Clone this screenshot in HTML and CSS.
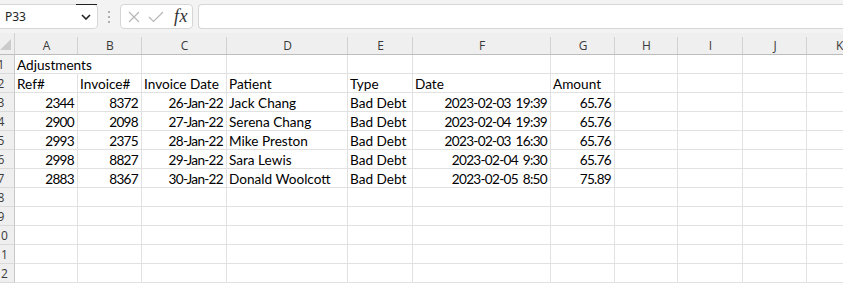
FILE: index.html
```html
<!DOCTYPE html>
<html>
<head>
<meta charset="utf-8">
<link rel="stylesheet" href="styles.css">
</head>
<body>
<div class="toolbar">
  <div class="namebox">
    <span class="name">P33</span>
    <svg class="chev" width="10" height="6" viewBox="0 0 10 6"><path d="M1 1 L5 5 L9 1" fill="none" stroke="#222" stroke-width="1.6"/></svg>
  </div>
  <div class="dots"><i></i><i></i><i></i></div>
  <div class="fbox">
    <svg width="12" height="12" viewBox="0 0 12 12"><path d="M1 1 L11 11 M11 1 L1 11" stroke="#b5b5b5" stroke-width="1.1" fill="none"/></svg>
    <svg width="16" height="12" viewBox="0 0 16 12"><path d="M1 6 L5.5 10.5 L15 1" stroke="#b5b5b5" stroke-width="1.1" fill="none"/></svg>
    <span class="fx">fx</span>
  </div>
  <div class="finput"></div>
</div>
<div class="sheet">
  <div class="corner"><svg width="11" height="11" viewBox="0 0 11 11"><path d="M11 0 L11 11 L0 11 Z" fill="#cbcbcb"/></svg></div>
  <div class="ch">A</div><div class="ch">B</div><div class="ch">C</div><div class="ch">D</div><div class="ch">E</div><div class="ch">F</div><div class="ch">G</div><div class="ch">H</div><div class="ch">I</div><div class="ch">J</div><div class="ch last">K</div>

  <div class="rh"><span>1</span></div>
  <div class="c nob">Adjustments</div><div class="c"></div><div class="c"></div><div class="c"></div><div class="c"></div><div class="c"></div><div class="c"></div><div class="c"></div><div class="c"></div><div class="c"></div><div class="c"></div>

  <div class="rh"><span>2</span></div>
  <div class="c">Ref#</div><div class="c">Invoice#</div><div class="c">Invoice Date</div><div class="c">Patient</div><div class="c">Type</div><div class="c">Date</div><div class="c">Amount</div><div class="c"></div><div class="c"></div><div class="c"></div><div class="c"></div>

  <div class="rh"><span>3</span></div>
  <div class="c r">2344</div><div class="c r">8372</div><div class="c r">26-Jan-22</div><div class="c">Jack Chang</div><div class="c">Bad Debt</div><div class="c r">2023-02-03 19:39</div><div class="c r">65.76</div><div class="c"></div><div class="c"></div><div class="c"></div><div class="c"></div>

  <div class="rh"><span>4</span></div>
  <div class="c r">2900</div><div class="c r">2098</div><div class="c r">27-Jan-22</div><div class="c">Serena Chang</div><div class="c">Bad Debt</div><div class="c r">2023-02-04 19:39</div><div class="c r">65.76</div><div class="c"></div><div class="c"></div><div class="c"></div><div class="c"></div>

  <div class="rh"><span>5</span></div>
  <div class="c r">2993</div><div class="c r">2375</div><div class="c r">28-Jan-22</div><div class="c">Mike Preston</div><div class="c">Bad Debt</div><div class="c r">2023-02-03 16:30</div><div class="c r">65.76</div><div class="c"></div><div class="c"></div><div class="c"></div><div class="c"></div>

  <div class="rh"><span>6</span></div>
  <div class="c r">2998</div><div class="c r">8827</div><div class="c r">29-Jan-22</div><div class="c">Sara Lewis</div><div class="c">Bad Debt</div><div class="c r">2023-02-04 9:30</div><div class="c r">65.76</div><div class="c"></div><div class="c"></div><div class="c"></div><div class="c"></div>

  <div class="rh"><span>7</span></div>
  <div class="c r">2883</div><div class="c r">8367</div><div class="c r">30-Jan-22</div><div class="c">Donald Woolcott</div><div class="c">Bad Debt</div><div class="c r">2023-02-05 8:50</div><div class="c r">75.89</div><div class="c"></div><div class="c"></div><div class="c"></div><div class="c"></div>

  <div class="rh"><span>8</span></div>
  <div class="c"></div><div class="c"></div><div class="c"></div><div class="c"></div><div class="c"></div><div class="c"></div><div class="c"></div><div class="c"></div><div class="c"></div><div class="c"></div><div class="c"></div>

  <div class="rh"><span>9</span></div>
  <div class="c"></div><div class="c"></div><div class="c"></div><div class="c"></div><div class="c"></div><div class="c"></div><div class="c"></div><div class="c"></div><div class="c"></div><div class="c"></div><div class="c"></div>

  <div class="rh"><span>10</span></div>
  <div class="c"></div><div class="c"></div><div class="c"></div><div class="c"></div><div class="c"></div><div class="c"></div><div class="c"></div><div class="c"></div><div class="c"></div><div class="c"></div><div class="c"></div>

  <div class="rh"><span>11</span></div>
  <div class="c"></div><div class="c"></div><div class="c"></div><div class="c"></div><div class="c"></div><div class="c"></div><div class="c"></div><div class="c"></div><div class="c"></div><div class="c"></div><div class="c"></div>

  <div class="rh"><span>12</span></div>
  <div class="c"></div><div class="c"></div><div class="c"></div><div class="c"></div><div class="c"></div><div class="c"></div><div class="c"></div><div class="c"></div><div class="c"></div><div class="c"></div><div class="c"></div>
</div>
</body>
</html>
```

FILE: styles.css
```css
* { box-sizing: border-box; }
html, body { margin: 0; padding: 0; background: #ffffff; overflow: hidden; }
body { width: 843px; height: 285px; font-family: "Open Sans", sans-serif; }

.toolbar {
  height: 33px;
  background: #f3f3f3;
  display: flex;
  align-items: flex-start;
  padding-top: 4px;
}
.namebox {
  width: 102px;
  height: 25px;
  margin-left: -4px;
  background: #fff;
  border: 1px solid #d6d6d6;
  border-radius: 4px;
  display: flex;
  align-items: center;
  justify-content: space-between;
  padding: 0 6px 0 8px;
  position: relative;
}
.namebox::before {
  content: "";
  position: absolute;
  top: -1px;
  left: 79px;
  width: 21px;
  height: 1px;
  background: #222;
}
.name { font-family: "Noto Sans", sans-serif; font-size: 12px; color: #1f1f1f; }
.chev { margin-top: 1px; }
.dots {
  width: 22px;
  height: 25px;
  display: flex;
  flex-direction: column;
  align-items: center;
  justify-content: center;
  gap: 3px;
}
.dots i { display: block; width: 2px; height: 2px; background: #9a9a9a; border-radius: 1px; }
.fbox {
  width: 73px;
  height: 25px;
  background: #fff;
  border: 1px solid #d6d6d6;
  border-radius: 4px;
  display: flex;
  align-items: center;
  padding: 0 0 0 7px;
  gap: 8px;
}
.fx {
  font-family: "Liberation Serif", serif;
  font-style: italic;
  font-size: 18px;
  color: #333;
  margin-left: 2px;
  letter-spacing: 0.5px;
}
.finput {
  flex: 1;
  height: 25px;
  margin-left: 5px;
  background: #fff;
  border: 1px solid #d6d6d6;
  border-right: none;
  border-radius: 4px 0 0 4px;
}

.sheet {
  display: grid;
  grid-template-columns: 15px 63px 64px 85px 121px 65px 138px 64px 63px 65px 64px 64px;
  grid-template-rows: 22px;
  grid-auto-rows: 19px;
}
.corner {
  background: #efefef;
  border-right: 1px solid #d0d0d0;
  border-bottom: 1px solid #bdbdbd;
  display: flex;
  align-items: flex-end;
  justify-content: flex-end;
  padding: 0 3px 4px 0;
}
.ch {
  background-color: #efefef;
  background-image: linear-gradient(#d2d2d2, #d2d2d2);
  background-size: 1px 17px;
  background-position: right bottom;
  background-repeat: no-repeat;
  border-bottom: 1px solid #bdbdbd;
  font-family: "Open Sans", sans-serif;
  font-size: 12px;
  color: #3a3a3a;
  display: flex;
  align-items: center;
  justify-content: center;
  padding-top: 3px;
}
.ch.last { justify-content: flex-start; padding-left: 29px; }
.rh {
  background: #efefef;
  border-right: 1px solid #c8c8c8;
  border-bottom: 1px solid #dadada;
  overflow: hidden;
  font-family: "Open Sans", sans-serif;
  font-size: 12px;
  color: #3a3a3a;
  line-height: 20px;
}
.rh span { display: block; width: 30px; margin-left: -14px; text-align: center; }
.c {
  border-right: 1px solid #e1e1e1;
  border-bottom: 1px solid #e1e1e1;
  font-family: "Lato", sans-serif;
  font-size: 13.6px;
  color: #000;
  white-space: nowrap;
  line-height: 21px;
  padding: 0 2px 0 2px;
}
.c.r { text-align: right; padding-right: 3px; letter-spacing: -0.7px; word-spacing: 2px; }
.c.nob { border-right-color: transparent; }
```
